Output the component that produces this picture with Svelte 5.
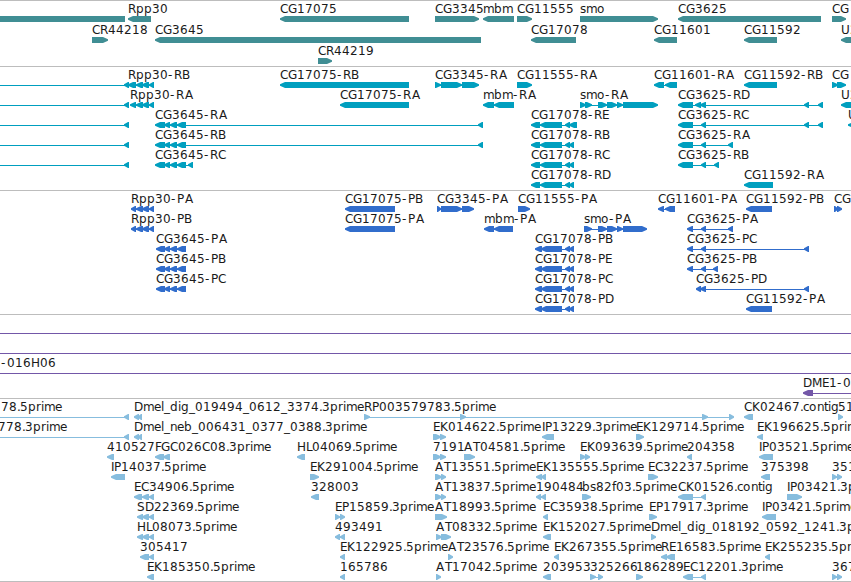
<script lang="ts">
	type Exon = [number, number];
	/** row, label, label x, strand, exons */
	type Feature = [number, string, number, '<' | '>', Exon[]];

	interface Track {
		id: string;
		color: string;
		height: number;
		pitch: number;
		features: Feature[];
	}

	// Advance widths of the label font on the pixel grid (digits and most letters are 8)
	const advances: Record<string, number> = {
		'-': 6, '.': 3, _: 6, A: 9, G: 9, D: 9, H: 9, U: 9, M: 10, I: 3, E: 7, P: 7, T: 7, L: 6, F: 6,
		r: 5, i: 3, l: 3, m: 11, n: 7, e: 7, s: 6, c: 6, t: 4, f: 4
	};

	const rpp: Exon[] = [[136, 143], [142, 149], [149, 154]];
	const cg3645: Exon[] = [[164, 170], [170, 177], [177, 186]];
	const smo: Exon[] = [[598, 607], [607, 617], [617, 623]];
	const cg17078: Exon[] = [[531, 540], [540, 562], [565, 570], [569, 574]];
	const cg17078p: Exon[] = [[535, 542], [541, 562], [565, 570], [569, 574]];
	const leftEnd: Exon[] = [[-20, -10], [124, 129]];

	const tracks: Track[] = [
		{
			id: 'genes', color: '#408e94', height: 66, pitch: 21,
			features: [
				[0, '', 0, '<', [[-20, 125]]],
				[0, 'Rpp30', 128, '<', [[128, 151]]],
				[0, 'CG17075', 280, '<', [[280, 409]]],
				[0, 'CG3345', 435, '>', [[435, 479]]],
				[0, 'mbm', 483, '<', [[483, 514]]],
				[0, 'CG11555', 517, '>', [[517, 532]]],
				[0, 'smo', 580, '>', [[580, 658]]],
				[0, 'CG3625', 678, '<', [[678, 821]]],
				[0, 'CG', 832, '>', [[832, 846]]],
				[1, 'CR44218', 92, '>', [[92, 108]]],
				[1, 'CG3645', 155, '<', [[155, 481]]],
				[1, 'CG17078', 531, '<', [[531, 576]]],
				[1, 'CG11601', 654, '<', [[654, 677]]],
				[1, 'CG11592', 744, '<', [[744, 777]]],
				[1, 'U2', 841, '<', [[841, 870]]],
				[2, 'CR44219', 318, '>', [[318, 332]]]
			]
		},
		{
			id: 'transcripts', color: '#009fbf', height: 124, pitch: 20,
			features: [
				[0, '', 0, '<', leftEnd],
				[0, 'Rpp30-RB', 128, '<', [[128, 136], ...rpp]],
				[0, 'CG17075-RB', 280, '<', [[280, 409]]],
				[0, 'CG3345-RA', 435, '>', [[435, 441], [441, 462], [462, 479]]],
				[0, 'CG11555-RA', 517, '>', [[517, 532]]],
				[0, 'CG11601-RA', 654, '<', [[654, 664], [665, 677]]],
				[0, 'CG11592-RB', 744, '<', [[744, 777]]],
				[0, 'CG', 832, '>', [[832, 838], [837, 846]]],
				[1, '', 0, '<', leftEnd],
				[1, 'Rpp30-RA', 130, '<', [[130, 136], ...rpp]],
				[1, 'CG17075-RA', 340, '<', [[340, 409]]],
				[1, 'mbm-RA', 483, '<', [[483, 494], [494, 514]]],
				[1, 'smo-RA', 580, '>', [[580, 586], [585, 592], ...smo, [623, 658]]],
				[1, 'CG3625-RD', 678, '<', [[678, 693], [695, 701], [700, 706], [804, 809], [818, 823]]],
				[1, 'U2', 841, '<', [[841, 870]]],
				[2, '', 0, '<', leftEnd],
				[2, 'CG3645-RA', 155, '<', [[155, 165], ...cg3645, [478, 483]]],
				[2, 'CG17078-RE', 531, '<', [[531, 540], [540, 562], [565, 570], [569, 577]]],
				[2, 'CG3625-RC', 678, '<', [[678, 693], [701, 706], [804, 809], [818, 823]]],
				[2, 'U', 848, '<', [[848, 870]]],
				[3, '', 0, '<', leftEnd],
				[3, 'CG3645-RB', 155, '<', [[155, 165], ...cg3645, [478, 483]]],
				[3, 'CG17078-RB', 531, '<', cg17078],
				[3, 'CG3625-RA', 678, '<', [[678, 693], [701, 706], [728, 733]]],
				[4, '', 0, '<', leftEnd],
				[4, 'CG3645-RC', 155, '<', [[155, 165], ...cg3645, [188, 193]]],
				[4, 'CG17078-RC', 531, '<', cg17078],
				[4, 'CG3625-RB', 678, '<', [[678, 693], [701, 706], [714, 719]]],
				[5, 'CG17078-RD', 531, '<', cg17078],
				[5, 'CG11592-RA', 744, '<', [[744, 773]]]
			]
		},
		{
			id: 'proteins', color: '#316dcc', height: 124, pitch: 20,
			features: [
				[0, 'Rpp30-PA', 131, '<', [[131, 136], ...rpp]],
				[0, 'CG17075-PB', 345, '<', [[345, 395]]],
				[0, 'CG3345-PA', 437, '>', [[437, 441], [441, 462], [462, 474]]],
				[0, 'CG11555-PA', 518, '>', [[518, 530]]],
				[0, 'CG11601-PA', 658, '<', [[658, 664], [665, 675]]],
				[0, 'CG11592-PB', 746, '<', [[746, 772]]],
				[0, 'CG', 834, '>', [[834, 838], [837, 842]]],
				[1, 'Rpp30-PB', 131, '<', [[131, 136], ...rpp]],
				[1, 'CG17075-PA', 345, '<', [[345, 395]]],
				[1, 'mbm-PA', 484, '<', [[484, 494], [494, 513]]],
				[1, 'smo-PA', 584, '>', [[584, 592], ...smo, [623, 647]]],
				[1, 'CG3625-PA', 687, '<', [[687, 693], [701, 706], [728, 733]]],
				[2, 'CG3645-PA', 156, '<', [[156, 165], ...cg3645]],
				[2, 'CG17078-PB', 535, '<', cg17078p],
				[2, 'CG3625-PC', 687, '<', [[687, 693], [701, 706], [804, 809]]],
				[3, 'CG3645-PB', 156, '<', [[156, 165], ...cg3645]],
				[3, 'CG17078-PE', 535, '<', cg17078p],
				[3, 'CG3625-PB', 687, '<', [[687, 693], [701, 706], [713, 718]]],
				[4, 'CG3645-PC', 156, '<', [[156, 165], ...cg3645]],
				[4, 'CG17078-PC', 535, '<', cg17078p],
				[4, 'CG3625-PD', 696, '<', [[696, 701], [700, 706], [804, 809]]],
				[5, 'CG17078-PD', 535, '<', cg17078p],
				[5, 'CG11592-PA', 746, '<', [[746, 772]]]
			]
		},
		{
			id: 'clones', color: '#7357a8', height: 84, pitch: 20,
			features: [
				[0, '', 0, '<', [[-20, -10], [860, 870]]],
				[1, '', 0, '<', [[-20, -10], [860, 870]]],
				[2, '-016H06', 1, '<', [[-20, -10], [860, 870]]],
				[3, 'DME1-0', 803, '<', [[803, 813], [860, 870]]]
			]
		},
		{
			id: 'ests', color: '#87bdde', height: 183, pitch: 20,
			features: [
				[0, '78.5prime', 1, '<', leftEnd],
				[0, 'Dmel_dig_019494_0612_3374.3prime', 134, '<', [[134, 139], [138, 142]]],
				[0, 'RP003579783.5prime', 364, '>', [[364, 370], [460, 466], [702, 708], [729, 734]]],
				[0, 'CK02467.contig', 744, '<', [[744, 753]]],
				[0, '51', 838, '>', [[838, 843]]],
				[1, '778.3prime', -2, '<', leftEnd],
				[1, 'Dmel_neb_006431_0377_0388.3prime', 134, '<', [[134, 139], [138, 142]]],
				[1, 'EK014622.5prime', 433, '>', [[433, 441], [440, 446]]],
				[1, 'IP13229.3prime', 542, '<', [[542, 554]]],
				[1, 'EK129714.5prime', 636, '>', [[636, 644]]],
				[1, 'EK196625.5prime', 757, '<', [[757, 763]]],
				[2, '410527', 107, '<', [[107, 114]]],
				[2, 'FGC026C08.3prime', 155, '<', [[155, 164], [163, 170]]],
				[2, 'HL04069.5prime', 297, '<', [[297, 305]]],
				[2, '7191', 433, '>', [[433, 441], [440, 446]]],
				[2, 'AT04581.5prime', 464, '>', [[464, 475]]],
				[2, 'EK093639.5prime', 580, '>', [[580, 586], [585, 590]]],
				[2, '204358', 687, '<', [[687, 692]]],
				[2, 'IP03521.5prime', 759, '<', [[759, 773]]],
				[3, 'IP14037.5prime', 111, '<', [[111, 125]]],
				[3, 'EK291004.5prime', 310, '>', [[310, 319]]],
				[3, 'AT13551.5prime', 435, '>', [[435, 442], [441, 446]]],
				[3, 'EK135555.5prime', 536, '<', [[536, 542], [541, 546]]],
				[3, 'EC32237.5prime', 648, '>', [[648, 658]]],
				[3, '375398', 761, '<', [[761, 770]]],
				[3, '351', 832, '>', [[832, 837], [837, 842]]],
				[4, 'EC34906.5prime', 134, '<', [[134, 142], [142, 149], [149, 154]]],
				[4, '328003', 311, '<', [[311, 319]]],
				[4, 'AT13837.5prime', 435, '>', [[435, 442], [441, 446]]],
				[4, '190484', 536, '<', [[536, 541], [541, 546]]],
				[4, 'bs82f03.5prime', 582, '>', [[582, 591]]],
				[4, 'CK01526.contig', 678, '<', [[678, 693], [701, 706]]],
				[4, 'IP03421.3prime', 787, '>', [[787, 802]]],
				[5, 'SD22369.5prime', 137, '<', [[137, 143], [142, 149], [149, 154]]],
				[5, 'EP15859.3prime', 335, '>', [[335, 340], [340, 345]]],
				[5, 'AT18993.5prime', 435, '>', [[435, 447]]],
				[5, 'EC35938.5prime', 543, '<', [[543, 548]]],
				[5, 'EP17917.3prime', 649, '>', [[649, 657]]],
				[5, 'IP03421.5prime', 762, '<', [[762, 776]]],
				[6, 'HL08073.5prime', 137, '<', [[137, 143], [142, 149], [149, 154]]],
				[6, '493491', 335, '<', [[335, 340], [340, 345]]],
				[6, 'AT08332.5prime', 436, '>', [[436, 442], [441, 451]]],
				[6, 'EK152027.5prime', 543, '<', [[543, 551]]],
				[6, 'Dmel_dig_018192_0592_1241.3prime', 651, '>', [[651, 656]]],
				[7, '305417', 140, '<', [[140, 149], [149, 154]]],
				[7, 'EK122925.5prime', 340, '<', [[340, 345]]],
				[7, 'AT23576.5prime', 448, '>', [[448, 453]]],
				[7, 'EK267355.5prime', 554, '<', [[554, 559]]],
				[7, 'RE16583.5prime', 661, '<', [[661, 667], [666, 675]]],
				[7, 'EK255235.5prime', 765, '<', [[765, 770]]],
				[8, 'EK185350.5prime', 147, '<', [[147, 154]]],
				[8, '165786', 340, '<', [[340, 345]]],
				[8, 'AT17042.5prime', 436, '>', [[436, 441]]],
				[8, '203953', 543, '<', [[543, 551]]],
				[8, '325266', 590, '>', [[590, 596], [598, 603]]],
				[8, '186289', 636, '>', [[636, 643]]],
				[8, 'EC12201.3prime', 683, '<', [[683, 693], [701, 706]]],
				[8, '367', 832, '>', [[832, 837], [837, 842]]]
			]
		}
	];

	function glyphX(label: string, x: number) {
		let pos = x;
		return [...label]
			.map((ch, i) => {
				// A trailing A sits one pixel further right (-RA, -PA)
				if (ch === 'A' && i > 0) pos += 1;
				const at = pos;
				pos += advances[ch] ?? 8;
				return at;
			})
			.join(' ');
	}

	// Box with a blunt pointed end on the strand side
	function exonPath([a, b]: Exon, strand: string, y: number) {
		const head = Math.min(5, b - a - 1);
		const [tip, end, dir] = strand === '<' ? [a, b, 1] : [b, a, -1];
		const neck = tip + head * dir;
		return `M${tip} ${y + 2.3}L${neck} ${y}H${end}V${y + 6}H${neck}L${tip} ${y + 3.7}Z`;
	}
</script>

<main class="browser">
	{#each tracks as track (track.id)}
		<section class="track">
			<svg width="851" height={track.height - 1} viewBox="0 1 851 {track.height - 1}">
				{#each track.features as [row, label, x, strand, exons]}
					{@const top = row * track.pitch}
					<g fill={track.color}>
						{#if exons.length > 1}
							<rect
								x={exons[0][0] + 3}
								y={top + 19}
								width={exons[exons.length - 1][1] - exons[0][0] - 6}
								height="1"
							/>
						{/if}
						{#each exons as exon}
							<path d={exonPath(exon, strand, top + 16)} />
						{/each}
					</g>
					{#if label}
						<text x={glyphX(label, x)} y={top + 13}>{label}</text>
					{/if}
				{/each}
			</svg>
		</section>
	{/each}
</main>

<style>
	:global(body) {
		margin: 0;
		background: #fff;
	}

	.browser {
		display: flex;
		flex-direction: column;
		width: 851px;
		height: 582px;
		box-sizing: border-box;
		overflow: hidden;
		border-bottom: 1px solid #bdbdbd;
	}

	.track {
		flex: none;
		border-top: 1px solid #bdbdbd;
	}

	svg {
		display: block;
	}

	text {
		font-family: 'DejaVu Sans', sans-serif;
		font-size: 12px;
		fill: #1a1a1a;
	}
</style>
